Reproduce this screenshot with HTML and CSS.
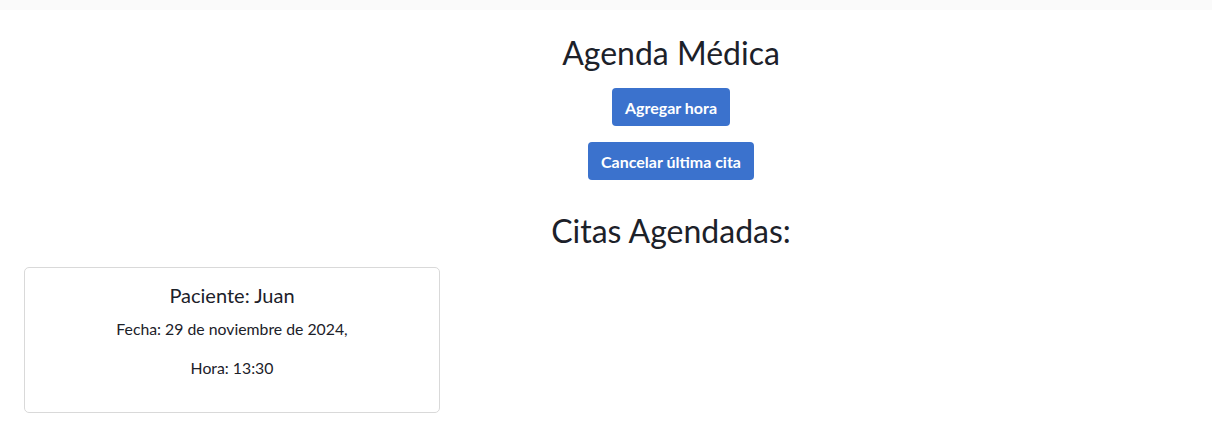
FILE: index.html
```html
<!DOCTYPE html>
<html lang="es">
<head>
<meta charset="utf-8">
<title>Agenda Médica</title>
<link rel="stylesheet" href="styles.css">
</head>
<body>
<div class="topbar"></div>
<main class="app">
  <header class="header">
    <h1 class="title">Agenda Médica</h1>
    <div class="actions">
      <button class="btn">Agregar hora</button>
      <button class="btn">Cancelar última cita</button>
    </div>
    <h2 class="subtitle">Citas Agendadas:</h2>
  </header>
  <section class="list">
    <article class="card">
      <h3 class="card-title">Paciente: Juan</h3>
      <p class="card-text">Fecha: 29 de noviembre de 2024,</p>
      <p class="card-text">Hora: 13:30</p>
    </article>
  </section>
</main>
</body>
</html>
```
FILE: styles.css
```css
* { box-sizing: border-box; }
html, body { margin: 0; padding: 0; background: #fff; }
body {
  font-family: Lato, "Noto Sans", sans-serif;
  color: #1c2129;
}
.topbar { height: 10px; background: #fafafa; }
.app { padding: 0 24px; }
.header {
  padding-left: 130px;
  display: flex;
  flex-direction: column;
  align-items: center;
}
.title {
  margin: 24px 0 0;
  font-size: 32px;
  font-weight: 400;
  line-height: 38px;
}
.actions {
  margin-top: 16px;
  display: flex;
  flex-direction: column;
  align-items: center;
  gap: 16px;
}
.btn {
  font-family: Lato, "Noto Sans", sans-serif;
  font-weight: 700;
  font-size: 16px;
  color: #fff;
  background: #3b72cd;
  border: none;
  border-radius: 4px;
  height: 38px;
  padding: 0 13px;
}
.subtitle {
  margin: 32px 0 0;
  font-size: 32px;
  font-weight: 400;
  line-height: 38px;
}
.list { margin-top: 17px; display: flex; }
.card {
  width: 416px;
  height: 146px;
  border: 1px solid #d9d9d9;
  border-radius: 5px;
  text-align: center;
  padding-top: 15px;
}
.card-title {
  margin: 0;
  font-size: 20px;
  font-weight: 400;
  line-height: 24px;
}
.card-text {
  margin: 10px 0 0;
  font-size: 15.8px;
  line-height: 24px;
}
.card-text + .card-text { margin-top: 15px; }
```
